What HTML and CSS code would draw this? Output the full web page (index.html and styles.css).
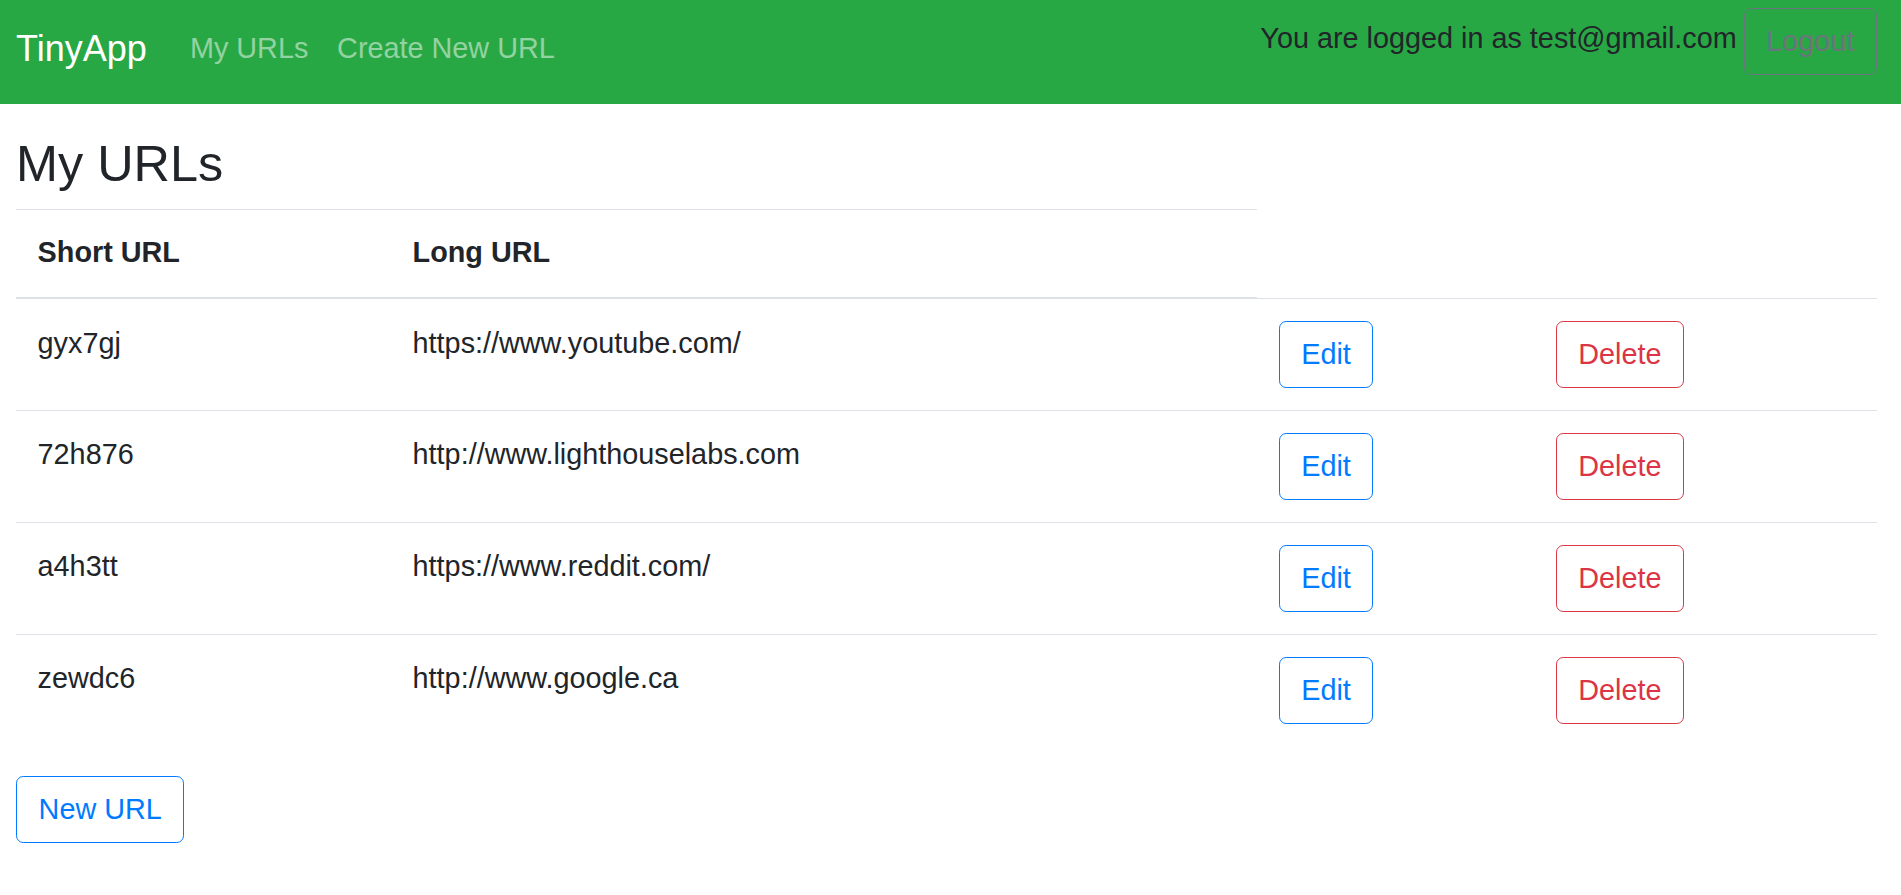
FILE: index.html
```html
<!DOCTYPE html>
<html lang="en">
<head>
<meta charset="utf-8">
<title>TinyApp - My URLs</title>
<link rel="stylesheet" href="styles.css">
</head>
<body>
<nav class="navbar">
  <div class="nav-left">
    <a class="brand" href="#">TinyApp</a>
    <a class="nav-link" href="#">My URLs</a>
    <a class="nav-link" href="#">Create New URL</a>
  </div>
  <div class="nav-right">
    <span class="user">You are logged in as test@gmail.com</span>
    <button class="btn btn-secondary">Logout</button>
  </div>
</nav>
<main class="content">
  <h3 class="title">My URLs</h3>
  <table class="url-table">
    <colgroup>
      <col class="col-short">
      <col class="col-long">
      <col class="col-edit">
      <col class="col-delete">
    </colgroup>
    <thead>
      <tr>
        <th>Short URL</th>
        <th>Long URL</th>
      </tr>
    </thead>
    <tbody>
      <tr>
        <td>gyx7gj</td>
        <td>https://www.youtube.com/</td>
        <td><button class="btn btn-primary">Edit</button></td>
        <td><button class="btn btn-danger">Delete</button></td>
      </tr>
      <tr>
        <td>72h876</td>
        <td>http://www.lighthouselabs.com</td>
        <td><button class="btn btn-primary">Edit</button></td>
        <td><button class="btn btn-danger">Delete</button></td>
      </tr>
      <tr>
        <td>a4h3tt</td>
        <td>https://www.reddit.com/</td>
        <td><button class="btn btn-primary">Edit</button></td>
        <td><button class="btn btn-danger">Delete</button></td>
      </tr>
      <tr>
        <td>zewdc6</td>
        <td>http://www.google.ca</td>
        <td><button class="btn btn-primary">Edit</button></td>
        <td><button class="btn btn-danger">Delete</button></td>
      </tr>
    </tbody>
  </table>
  <button class="btn btn-primary">New URL</button>
</main>
</body>
</html>
```

FILE: styles.css
```css
html, body {
  margin: 0;
  padding: 0;
}
body {
  font-family: "Liberation Sans", Arial, sans-serif;
  font-size: 28.8px;
  line-height: 43.2px;
  color: #212529;
  background: #fff;
}
a {
  text-decoration: none;
}

/* Navbar */
.navbar {
  display: flex;
  justify-content: space-between;
  align-items: flex-start;
  height: 104px;
  box-sizing: border-box;
  padding: 0 24px 0 16px;
  background: #28a745;
}
.nav-left {
  display: flex;
  align-items: flex-start;
  margin-top: 22px;
}
.brand {
  color: #fff;
  font-size: 36px;
  line-height: 54px;
  margin-right: 28.8px;
}
.nav-link {
  color: rgba(255, 255, 255, 0.5);
  padding: 0 14.4px;
  line-height: 43.2px;
  margin-top: 4.5px;
}
.nav-right {
  display: flex;
  align-items: flex-start;
  margin-top: 8px;
}
.user {
  margin-top: 8.7px;
  margin-right: 7px;
  color: #212529;
}

/* Buttons */
.btn {
  display: inline-block;
  font-family: inherit;
  font-size: 28.8px;
  line-height: 43.2px;
  padding: 10.8px 21.6px;
  border: 1px solid;
  border-radius: 7.2px;
  background: transparent;
  margin: 0;
  cursor: pointer;
}
.btn-secondary {
  color: #6c757d;
  border-color: #6c757d;
}
.btn-primary {
  color: #007bff;
  border-color: #007bff;
}
.btn-danger {
  color: #dc3545;
  border-color: #dc3545;
}

/* Content */
.content {
  padding: 0 24px 0 16px;
}
.title {
  margin: 30px 0 14.4px;
  font-size: 50.4px;
  line-height: 60.5px;
  font-weight: 500;
}
.url-table {
  width: 100%;
  border-collapse: collapse;
  table-layout: fixed;
  margin-bottom: 30px;
}
.col-short { width: 375px; }
.col-long { width: 866px; }
.col-edit { width: 277px; }
.col-delete { width: auto; }
.url-table th,
.url-table td {
  padding: 22.6px 21.6px 21.6px;
  text-align: left;
  vertical-align: top;
  border-top: 1px solid #dee2e6;
}
.url-table th {
  padding: 21.6px 21.6px 22.6px;
  font-weight: bold;
  vertical-align: bottom;
  border-bottom: 2px solid #dee2e6;
}
```
